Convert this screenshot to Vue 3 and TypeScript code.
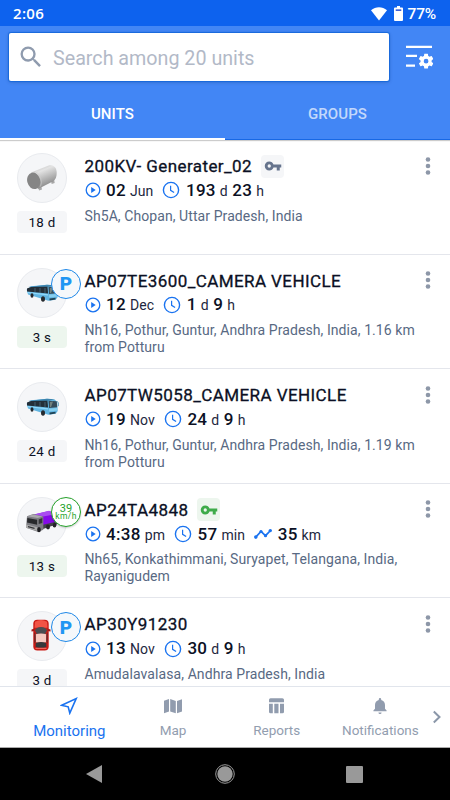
<script setup lang="ts">
type Vehicle = 'tank' | 'bus' | 'truck' | 'car'

interface Metric {
  icon: 'play' | 'clock' | 'track'
  parts: [string, string][]
}

interface Unit {
  name: string
  vehicle: Vehicle
  age: string
  online: boolean
  parked?: boolean
  speed?: string
  key?: 'off' | 'on'
  metrics: Metric[]
  address: string[]
}

const units: Unit[] = [
  {
    name: '200KV- Generater_02', vehicle: 'tank', age: '18 d', online: false, key: 'off',
    metrics: [
      { icon: 'play', parts: [['02', 'Jun']] },
      { icon: 'clock', parts: [['193', 'd'], ['23', 'h']] },
    ],
    address: ['Sh5A, Chopan, Uttar Pradesh, India'],
  },
  {
    name: 'AP07TE3600_CAMERA VEHICLE', vehicle: 'bus', age: '3 s', online: true, parked: true,
    metrics: [
      { icon: 'play', parts: [['12', 'Dec']] },
      { icon: 'clock', parts: [['1', 'd'], ['9', 'h']] },
    ],
    address: ['Nh16, Pothur, Guntur, Andhra Pradesh, India, 1.16 km', 'from Potturu'],
  },
  {
    name: 'AP07TW5058_CAMERA VEHICLE', vehicle: 'bus', age: '24 d', online: false,
    metrics: [
      { icon: 'play', parts: [['19', 'Nov']] },
      { icon: 'clock', parts: [['24', 'd'], ['9', 'h']] },
    ],
    address: ['Nh16, Pothur, Guntur, Andhra Pradesh, India, 1.19 km', 'from Potturu'],
  },
  {
    name: 'AP24TA4848', vehicle: 'truck', age: '13 s', online: true, speed: '39', key: 'on',
    metrics: [
      { icon: 'play', parts: [['4:38', 'pm']] },
      { icon: 'clock', parts: [['57', 'min']] },
      { icon: 'track', parts: [['35', 'km']] },
    ],
    address: ['Nh65, Konkathimmani, Suryapet, Telangana, India,', 'Rayanigudem'],
  },
  {
    name: 'AP30Y91230', vehicle: 'car', age: '3 d', online: false, parked: true,
    metrics: [
      { icon: 'play', parts: [['13', 'Nov']] },
      { icon: 'clock', parts: [['30', 'd'], ['9', 'h']] },
    ],
    address: ['Amudalavalasa, Andhra Pradesh, India'],
  },
]
</script>

<template>
  <div class="screen">
    <div class="status">
      <span class="time">2:06</span>
      <div class="indicators">
        <svg class="wifi" width="16" height="14" viewBox="0 0 16 14"><path d="M0 3.2C4.6-.9 11.4-.9 16 3.2L8 13.4z" fill="#fff" /></svg>
        <svg class="battery" width="9" height="15" viewBox="0 0 9 15"><path d="M3 0h3v1.5h2q1 0 1 1V14q0 1-1 1H1q-1 0-1-1V2.500q0-1 1-1h2z" fill="#fff" /><path d="M1.700 3.400h5.600v1.500H1.700z" fill="#2b50d0" /></svg>
        <span class="percent">77%</span>
      </div>
    </div>

    <header class="header">
      <div class="search-row">
        <div class="search">
          <svg width="28" height="28" viewBox="0 0 24 24"><path fill="#8f9bae" d="M15.500 14h-.79l-.28-.27A6.470 6.470 0 0 0 16 9.500 6.500 6.500 0 1 0 9.500 16c1.610 0 3.090-.59 4.230-1.570l.27.28v.79l5 4.990L20.490 19zm-6 0a4.500 4.500 0 1 1 0-9 4.500 4.500 0 0 1 0 9z" /></svg>
          <span>Search among 20 units</span>
        </div>
        <svg class="filter" width="28" height="24" viewBox="0 0 28 24">
          <path d="M1 1.900h26M1 10.800h11M1 20.600h9" stroke="#fff" stroke-width="2.200" fill="none" />
          <path transform="translate(12.200 7.300) scale(.74)" fill="#fff" d="M19.430 12.980c.04-.32.07-.64.07-.98s-.03-.66-.07-.98l2.110-1.650c.19-.15.24-.42.12-.64l-2-3.460c-.12-.22-.39-.3-.61-.22l-2.490 1c-.52-.4-1.080-.73-1.690-.98l-.38-2.650A.49.490 0 0 0 14 2h-4c-.25 0-.46.18-.49.42l-.38 2.650c-.61.25-1.170.59-1.690.98l-2.490-1c-.23-.09-.49 0-.61.22l-2 3.460c-.13.22-.07.49.12.64l2.110 1.650c-.04.32-.07.65-.07.98s.03.66.07.98l-2.110 1.650c-.19.15-.24.42-.12.64l2 3.460c.12.22.39.3.61.22l2.490-1c.52.4 1.080.73 1.690.98l.38 2.650c.03.24.24.42.49.42h4c.25 0 .46-.18.49-.42l.38-2.650c.61-.25 1.170-.59 1.690-.98l2.490 1c.23.09.49 0 .61-.22l2-3.460c.12-.22.07-.49-.12-.64zM12 15.200a3.200 3.200 0 1 1 0-6.400 3.200 3.200 0 0 1 0 6.400z" />
        </svg>
      </div>
      <div class="tabs">
        <div class="tab active">UNITS</div>
        <div class="tab">GROUPS</div>
      </div>
    </header>

    <main class="list">
      <article v-for="unit in units" :key="unit.name" class="unit">
        <div class="side">
          <div class="avatar">
            <svg v-if="unit.vehicle === 'tank'" width="32" height="28" viewBox="0 0 32 28">
              <defs>
                <linearGradient id="tankBody" x1="0" y1="0" x2=".45" y2="1"><stop offset="0" stop-color="#b5b5b5" /><stop offset=".35" stop-color="#e3e3e3" /><stop offset="1" stop-color="#858585" /></linearGradient>
              </defs>
              <path d="M12 22l3-1 1 4.500-3 1zM25 17l3-2 .7 4-3 1z" fill="#a8a8a8" />
              <path d="M5 8.500L22 1.700c5-1.700 8.500 1.300 8.700 7 .1 4-1.200 7-3.500 8.500L12 25z" fill="url(#tankBody)" />
              <ellipse cx="7.700" cy="16.800" rx="6.500" ry="8.400" transform="rotate(-14 7.700 16.800)" fill="#858585" />
              <path d="M8.500 7.500q4 .5 6 6t0 9" stroke="#ccc" stroke-width=".6" fill="none" />
            </svg>
            <svg v-else-if="unit.vehicle === 'bus'" width="33" height="18" viewBox="0 0 33 18">
              <path d="M.7 5.500L5 2.200 21 .8l7.500.8 2.600 2.200.6 9.300-2 2.600-7.400 1.100L2 10.500z" fill="#62b5e2" />
              <path d="M2 2.900L21 .7l8 .6-8 1.700z" fill="#3d84ad" />
              <path d="M1 4.500L5 3l16.500-.2.600 6.700L1 7.600z" fill="#232e38" />
              <path d="M22.500 2.700l8.200.5.500 6-8.200.8z" fill="#354b59" />
              <path d="M24 4l3-.5-2 5.800-1-.2z" fill="#71817f" />
              <path d="M1 8l21 2.300v1.300L1 9z" fill="#91d9fb" />
              <path d="M23 10.700l8.500-.8v2.700l-8.500.8z" fill="#87cfef" />
              <path d="M23.500 14.500l6-.7v1.700l-6 1z" fill="#204355" />
              <ellipse cx="6" cy="11.500" rx="1.500" ry="2.300" fill="#25292e" /><ellipse cx="17" cy="15" rx="2" ry="2.800" fill="#25292e" />
              <path d="M31 3.500l1.300 1v3.700" stroke="#5c9cb9" stroke-width="1" fill="none" />
              <path d="M9 4v4M14 4v5M19 4v5" stroke="#557386" stroke-width=".7" />
            </svg>
            <svg v-else-if="unit.vehicle === 'truck'" width="34" height="23" viewBox="0 0 34 23">
              <path d="M9 4.500L24 1l8 3.500v9.800L17 18z" fill="#8509e8" />
              <path d="M9 4.500L24 .8l8 3.200-14 2.600z" fill="#a94cf0" />
              <path d="M17 15l15-3.500v2.700L18 19z" fill="#44424a" />
              <path d="M2 6.200L8.300 4l10 2.400v13.300l-5 2.200L1 17.800z" fill="#7d7d82" />
              <path d="M2 6.200L8 4.400l9.700 2.200-5 1.400z" fill="#aaa9ad" />
              <path d="M2.300 8l9.800 1.700v5L2 12.600z" fill="#27282b" />
              <path d="M13.700 9.500l3.600-1.500v5l-3.600 1z" fill="#353639" />
              <path d="M1 14.500l11.500 2.700v3.700L1 17.700z" fill="#aaa" />
              <path d="M3 16l6.500 1.800v1.300L3 17.300z" fill="#303034" />
              <ellipse cx="14" cy="19.700" rx="1.800" ry="2.600" fill="#1d1d20" /><ellipse cx="23" cy="17" rx="2" ry="2.400" fill="#242428" /><ellipse cx="29.500" cy="15.200" rx="1.800" ry="2.200" fill="#242428" />
            </svg>
            <svg v-else class="car" width="20" height="32" viewBox="0 0 20 32">
              <rect x="2.300" y=".8" width="15.400" height="30.600" rx="4" fill="#c91a15" />
              <path d="M4 2.700Q10-.5 16 2.700l.5 6H3.500z" fill="#f15345" />
              <path d="M.5 10.400l3-1v2.500l-3 .5zM19.500 10.400l-3-1v2.500l3 .5z" fill="#a61b18" />
              <path d="M4 11.500Q5 8 10 8t6 3.500l-2 4q-4-1.500-8 0z" fill="#4a4c50" />
              <path d="M4.600 15.300q5.400-1.500 10.800 0l-.2 8q-5.200 1-10.400 0z" fill="#f5c9c0" />
              <path d="M4.700 24q5.300-2 10.600 0v3.900q-5.300 1.900-10.600 0z" fill="#36383b" />
              <path d="M3.400 13l1.200 2.700v7l-1.200 1.500zM16.600 13l-1.200 2.700v7l1.200 1.500z" fill="#55272a" />
              <path d="M4.500 29.400h11" stroke="#ef665b" stroke-width="1.200" />
            </svg>
            <div v-if="unit.parked" class="state parked">P</div>
            <div v-if="unit.speed" class="state speed"><span>{{ unit.speed }}</span><span>km/h</span></div>
          </div>
          <div class="age" :class="{ online: unit.online }">{{ unit.age }}</div>
        </div>

        <div class="info">
          <div class="title">
            <span>{{ unit.name }}</span>
            <i v-if="unit.key" class="key" :class="unit.key">
              <svg width="18" height="18" viewBox="0 0 24 24"><path fill="currentColor" d="M12.650 10A5.990 5.990 0 0 0 7 6c-3.310 0-6 2.690-6 6s2.690 6 6 6a5.990 5.990 0 0 0 5.650-4H17v4h4v-4h2v-4zM7 14.200a2.200 2.200 0 1 1 0-4.400 2.200 2.200 0 0 1 0 4.400z" /></svg>
            </i>
          </div>
          <div class="metrics">
            <div v-for="metric in unit.metrics" :key="metric.icon" class="metric" :class="metric.icon">
              <svg v-if="metric.icon === 'play'" width="16" height="16" viewBox="0 0 16 16"><circle cx="8" cy="8" r="6.800" fill="none" stroke="#1a73f0" stroke-width="1.300" /><path d="M6.200 4.900L10.700 8l-4.500 3.100z" fill="#1a73f0" /></svg>
              <svg v-else-if="metric.icon === 'clock'" width="18" height="18" viewBox="0 0 18 18"><circle cx="9" cy="9" r="7.600" fill="none" stroke="#1a73f0" stroke-width="1.400" /><path d="M8.600 4.700v4.600l3.500 2.200" fill="none" stroke="#1a73f0" stroke-width="1.200" /></svg>
              <svg v-else width="18" height="12" viewBox="0 0 18 12"><path d="M1.500 9.300L7 3.500l4.500 4.200 5-5.200" fill="none" stroke="#1a73f0" stroke-width="1.700" /><g fill="#1a73f0"><circle cx="1.800" cy="9.100" r="1.800" /><circle cx="7" cy="3.500" r="1.600" /><circle cx="11.500" cy="7.700" r="1.600" /><circle cx="16.300" cy="2.600" r="1.700" /></g></svg>
              <span v-for="part in metric.parts" :key="part[0]" class="part"><b>{{ part[0] }}</b><span>{{ part[1] }}</span></span>
            </div>
          </div>
          <div class="address"><div v-for="line in unit.address" :key="line">{{ line }}</div></div>
        </div>

        <svg class="more" width="6" height="18" viewBox="0 0 6 18"><g fill="#8d97a8"><circle cx="3" cy="2.500" r="2.300" /><circle cx="3" cy="9" r="2.300" /><circle cx="3" cy="15.500" r="2.300" /></g></svg>
      </article>
    </main>

    <nav class="bottom">
      <div class="item current">
        <svg width="18" height="18" viewBox="0 0 18 18"><path d="M1.700 8.300L16.200 1.600 9.800 16.100 8.200 9.800z" fill="none" stroke="#1a73f0" stroke-width="1.600" /></svg>
        <span>Monitoring</span>
      </div>
      <div class="item">
        <svg width="18" height="18" viewBox="0 0 18 18"><path fill="#919cae" d="M0 3.700L5 2v12.500L0 16.300zM6.200 2l5.600 1.900v12.400l-5.600-1.800zM13 3.900l5-1.700v12.400l-5 1.700z" /></svg>
        <span>Map</span>
      </div>
      <div class="item">
        <svg width="18" height="18" viewBox="0 0 18 18"><path fill="#919cae" d="M2.500 1.300h11.800q1.700 0 1.700 1.500v2.400H1V2.800q0-1.500 1.500-1.500zM1 6.800h3.800v9.400H2.500Q1 16.200 1 14.700zM6.300 6.800h4.200v9.400H6.300zM12 6.800h4v7.900q0 1.500-1.500 1.500H12z" /></svg>
        <span>Reports</span>
      </div>
      <div class="item">
        <svg width="18" height="18" viewBox="0 0 18 18"><path fill="#919cae" d="M9 17a1.600 1.600 0 0 0 1.600-1.500H7.400A1.600 1.600 0 0 0 9 17zM14 11.700V8c0-2.600-1.400-4.500-3.800-5.100V2.200a1.200 1.200 0 0 0-2.400 0v.7C5.400 3.500 4 5.400 4 8v3.700l-1.600 1.700v.9h13.200v-.9z" /></svg>
        <span>Notifications</span>
      </div>
      <svg class="next" width="10" height="14" viewBox="0 0 10 14"><path d="M1.800 1.500L7.500 7l-5.700 5.500" fill="none" stroke="#8b97a9" stroke-width="2" /></svg>
    </nav>

    <div class="system">
      <svg width="16" height="18" viewBox="0 0 16 18"><path d="M0 9L16 0v18z" fill="#999" /></svg>
      <svg width="20" height="20" viewBox="0 0 20 20"><circle cx="10" cy="10" r="9.300" fill="none" stroke="#999" stroke-width="1" /><circle cx="10" cy="10" r="7.700" fill="#999" /></svg>
      <svg width="17" height="17" viewBox="0 0 17 17"><rect width="17" height="17" rx="1" fill="#999" /></svg>
    </div>
  </div>
</template>

<style>
body { margin: 0; overflow: hidden; }
</style>

<style scoped>
.screen { width: 450px; height: 800px; display: flex; flex-direction: column; overflow: hidden; background: #fff; font-family: Roboto, sans-serif; color: #0b1024; }
.status { height: 26px; flex: none; box-sizing: border-box; padding: 1px 14px 0 13px; display: flex; align-items: center; justify-content: space-between; background: #0d62ee; color: #fff; font-size: 15.5px; font-weight: 500; }
.time { font-family: "Open Sans", sans-serif; font-weight: 600; font-size: 15px; line-height: 20px; margin-top: -2px; letter-spacing: .3px; }
.indicators { display: flex; align-items: center; }
.battery { margin: 0 5px 0 7px; }
.percent { letter-spacing: -.2px; }

.header { height: 114px; flex: none; display: flex; flex-direction: column; background: #4286f5; position: relative; z-index: 1; box-shadow: 0 1px 1px #0003; }
.search-row { height: 62px; display: flex; align-items: center; padding: 0 17px 0 9px; justify-content: space-between; }
.search { width: 380px; height: 48px; box-sizing: border-box; padding-left: 8px; border-radius: 2px; background: #fff; box-shadow: 0 0 1px 1px #1769dc, 0 1px 4px #0003; display: flex; align-items: center; gap: 8px; font-size: 19.7px; color: #b2b9c7; }
.search span { padding-top: 2px; }
.tabs { flex: 1; display: flex; }
.tab { flex: 1; box-sizing: border-box; display: flex; align-items: center; justify-content: center; padding-top: 1px; border-bottom: 1px solid #1768e5; font-size: 15px; letter-spacing: .1px; font-weight: 500; color: #c3d8fb; }
.tab.active { color: #fff; border-bottom: 2px solid #fff; }

.list { flex: 1; min-height: 0; overflow: hidden; }
.unit { height: 114.6px; box-sizing: border-box; border-bottom: 1px solid #e4e6ec; padding: 13px 19.5px 0 17px; display: flex; align-items: flex-start; }
.side { width: 50px; flex: none; }
.avatar { width: 50px; height: 50px; box-sizing: border-box; border: 1px solid #e9ebef; border-radius: 50%; background: #f5f6f8; display: flex; align-items: center; justify-content: center; position: relative; }
.avatar .car { margin-right: 2px; margin-top: -2px; }
.state { position: absolute; left: 33px; top: 0; width: 30px; height: 30px; box-sizing: border-box; border-radius: 50%; display: flex; align-items: center; justify-content: center; }
.parked { border: 1.3px solid #1e88e8; background: #f5f8fb; color: #2196f3; font-size: 19px; font-weight: 900; }
.speed { top: -1px; border: 1.5px solid #26a32b; background: #fff; color: #26a32b; flex-direction: column; font-size: 11px; line-height: 9px; box-shadow: 0 1px 2px #0003; }
.speed span:last-child { font-size: 8.5px; line-height: 7px; letter-spacing: .4px; }
.age { height: 22px; margin-top: 8px; border-radius: 4px; background: #f5f6f8; font-size: 13.3px; line-height: 24px; text-align: center; letter-spacing: .3px; }
.age.online { background: #edf6ee; }

.info { flex: 1; margin-left: 17.5px; min-width: 0; }
.title { height: 26px; display: flex; align-items: center; font-size: 17px; font-weight: 400; letter-spacing: .42px; -webkit-text-stroke: .3px currentColor; white-space: nowrap; }
.key { width: 23px; height: 23px; margin-left: 9px; border-radius: 4px; display: flex; align-items: center; justify-content: center; background: #f5f6f8; color: #66748d; }
.key.on { background: #edf6ee; color: #3eab4a; }
.key svg { stroke: none; }
.metrics { height: 22.6px; display: flex; align-items: center; gap: 9px; }
.metric { display: flex; align-items: center; gap: 4.5px; }
.metric > svg { flex: none; margin-right: 1px; }
.part { display: flex; align-items: baseline; gap: 4px; font-size: 14px; letter-spacing: .1px; line-height: 20px; color: #1d2740; }
.part b { font-size: 17px; font-weight: 500; letter-spacing: .3px; color: #0b1024; }
.address { margin-top: 6px; font-size: 14px; line-height: 16.8px; letter-spacing: .08px; color: #586983; white-space: nowrap; }
.more { flex: none; margin-top: 3.5px; }

.bottom { height: 62px; flex: none; box-sizing: border-box; border-top: 1px solid #e1e5ec; border-bottom: 1px solid #aaa; display: flex; padding-left: 17.5px; background: #fff; color: #929daf; position: relative; }
.item { width: 103.7px; display: flex; flex-direction: column; align-items: center; padding-top: 10px; font-size: 13.5px; }
.item span { margin-top: 7px; line-height: 17px; }
.item.current { color: #1a73f0; font-size: 15px; }
.item.current span { margin-top: 8px; }
.next { align-self: center; position: absolute; right: 8px; }
.system { height: 52px; flex: none; background: #000; display: flex; align-items: center; justify-content: space-between; padding: 0 87px 0 86px; box-sizing: border-box; }
.system svg:nth-child(2) { margin-left: 1px; }
</style>
